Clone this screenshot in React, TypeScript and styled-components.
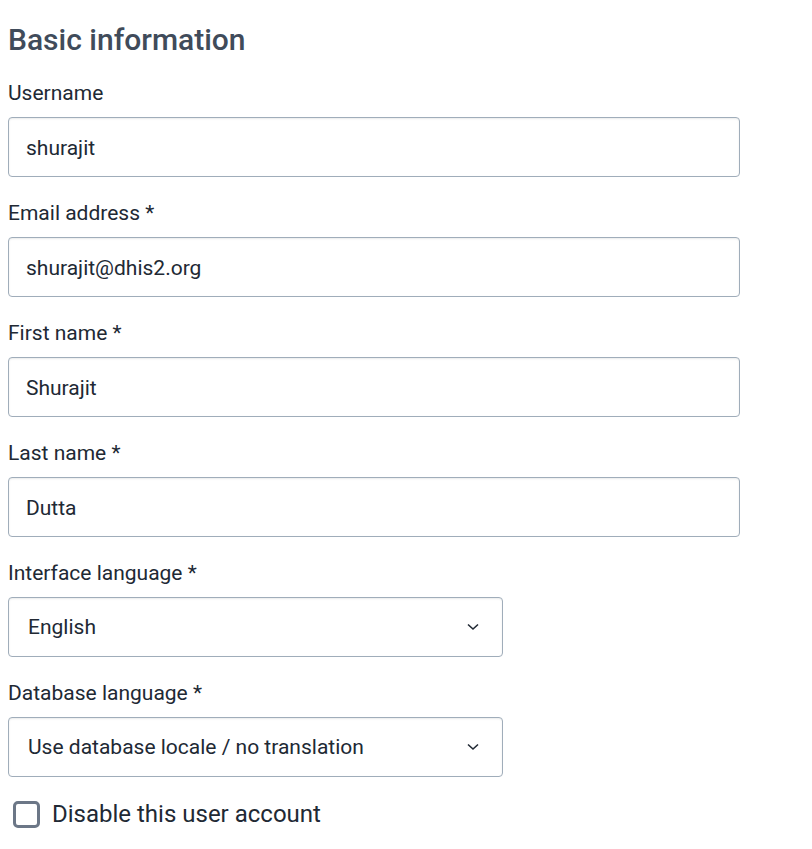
import React from "react";
import styled, { createGlobalStyle } from "styled-components";

const Global = createGlobalStyle`
  body {
    margin: 8px;
    font-family: Roboto, "Liberation Sans", sans-serif;
    background: #ffffff;
    color: #212934;
  }
`;

const Form = styled.div`
  display: flex;
  flex-direction: column;
`;

const Heading = styled.h2`
  margin: 14px 0 23px;
  font-size: 30px;
  line-height: 36px;
  font-weight: 500;
  color: #404b5a;
`;

const Field = styled.div`
  display: flex;
  flex-direction: column;
  gap: 11px;
  margin-bottom: 24px;
`;

const Label = styled.label`
  font-size: 21px;
  line-height: 25px;
  color: #212934;
`;

const Box = styled.div<{ $width: number }>`
  box-sizing: border-box;
  width: ${(p) => p.$width}px;
  height: 60px;
  border: 1px solid #a0adba;
  border-radius: 4px;
  box-shadow: inset 0 1px 2px rgba(48, 54, 60, 0.1);
  background: #ffffff;
  display: flex;
  align-items: center;
  font-size: 21px;
  line-height: 25px;
  color: #212934;
`;

const InputText = styled.span`
  padding-left: 17px;
  padding-top: 2px;
`;

const SelectText = styled.span`
  padding-left: 19px;
  flex: 1;
`;

const Chevron = styled.svg`
  width: 12px;
  height: 8px;
  margin-right: 23px;
`;

const CheckRow = styled.label`
  display: flex;
  align-items: center;
  gap: 12px;
  margin-top: -1px;
  padding-left: 5px;
  font-size: 24px;
  line-height: 28px;
  color: #212934;
`;

const CheckBox = styled.span`
  box-sizing: border-box;
  width: 27px;
  height: 27px;
  border: 3px solid #6c7787;
  border-radius: 5px;
  background: #fff;
`;

const TextField = ({ label, value }: { label: string; value: string }) => (
  <Field>
    <Label>{label}</Label>
    <Box $width={732}>
      <InputText>{value}</InputText>
    </Box>
  </Field>
);

const SelectField = ({ label, value }: { label: string; value: string }) => (
  <Field>
    <Label>{label}</Label>
    <Box $width={495}>
      <SelectText>{value}</SelectText>
      <Chevron viewBox="0 0 12 8">
        <path d="M1 1.5 L6 6 L11 1.5" fill="none" stroke="#212934" strokeWidth="1.6" />
      </Chevron>
    </Box>
  </Field>
);

export default function App() {
  return (
    <>
      <Global />
      <Form>
        <Heading>Basic information</Heading>
        <TextField label="Username" value="shurajit" />
        <TextField label="Email address *" value="shurajit@dhis2.org" />
        <TextField label="First name *" value="Shurajit" />
        <TextField label="Last name *" value="Dutta" />
        <SelectField label="Interface language *" value="English" />
        <SelectField label="Database language *" value="Use database locale / no translation" />
        <CheckRow>
          <CheckBox />
          Disable this user account
        </CheckRow>
      </Form>
    </>
  );
}
